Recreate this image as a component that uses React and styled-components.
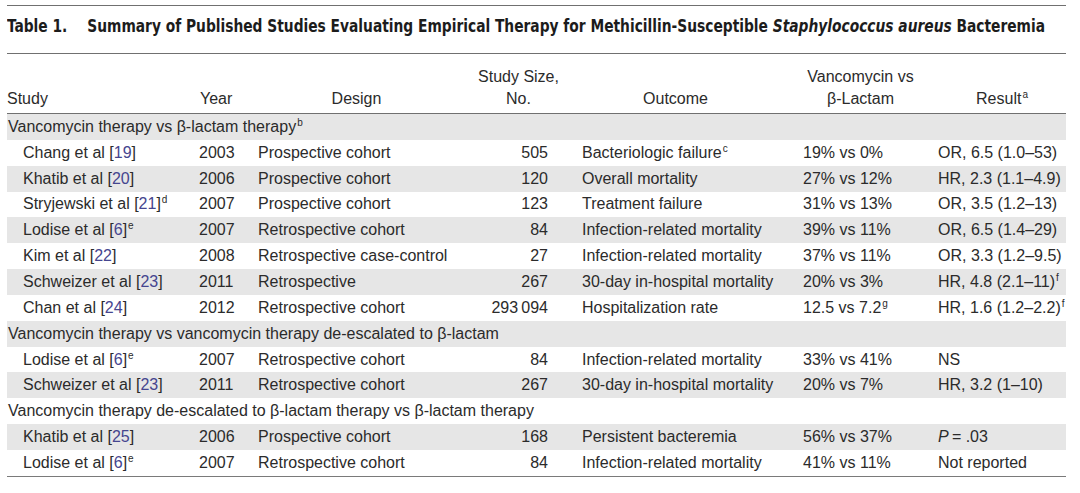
import React from "react";
import styled, { createGlobalStyle } from "styled-components";

const GlobalStyle = createGlobalStyle`
  html, body { margin: 0; padding: 0; background: #ffffff; }
  body { font-family: "Liberation Sans", Arial, sans-serif; color: #2b2b2b; }
`;

const COLS = "192px 59px 197px 127px 221px 135px 128px";

const Page = styled.div`
  width: 1059px;
  padding: 5px 0 0 7px;
`;

const TitleBar = styled.div`
  display: flex;
  align-items: center;
  height: 40px;
  padding-bottom: 7px;
  overflow: hidden;
  border-top: 1.5px solid #707070;
  border-bottom: 1.5px solid #707070;
`;

const TitleInner = styled.div`
  display: flex;
  flex: none;
  transform: scaleX(0.902);
  transform-origin: left center;
  font-family: "DejaVu Sans Condensed", "DejaVu Sans", sans-serif;
  font-stretch: condensed;
  font-weight: 700;
  font-size: 17px;
  color: #1c1c1c;
  white-space: nowrap;
`;

const TableLabel = styled.span`
  width: 89px;
  flex: none;
`;

const Table = styled.div`
  border-bottom: 1.5px solid #7a7a7a;
`;

const HeaderRow = styled.div`
  display: grid;
  grid-template-columns: ${COLS};
  align-items: end;
  height: 56px;
  padding-bottom: 3px;
  border-bottom: 1.5px solid #707070;
  font-size: 16px;
  line-height: 22px;
`;

const HeadCell = styled.div`
  text-align: ${(p) => p.$align || "center"};
  padding-right: ${(p) => p.$pr || 0}px;
  padding-left: ${(p) => p.$pl || 0}px;
  white-space: nowrap;
`;

const Row = styled.div`
  display: grid;
  grid-template-columns: ${COLS};
  align-items: center;
  height: 25.85px;
  background: ${(p) => (p.$shaded ? "#e6e6e6" : "transparent")};
  font-size: 16px;
  white-space: nowrap;
`;

const SectionRow = styled.div`
  display: flex;
  align-items: center;
  height: 25.85px;
  padding-left: 1px;
  background: ${(p) => (p.$shaded ? "#e6e6e6" : "transparent")};
  font-size: 16px;
  white-space: nowrap;
`;

const Cell = styled.div`
  text-align: ${(p) => p.$align || "left"};
  padding-left: ${(p) => p.$pl || 0}px;
  padding-right: ${(p) => p.$pr || 0}px;
`;

const Sup = styled.span`
  font-size: 10px;
  vertical-align: 6px;
  line-height: 0;
  margin-left: 1px;
`;

const RefNum = styled.span`
  color: #45458f;
`;

const Ital = styled.i`
  font-style: italic;
`;

const Ref = ({ n }) => (
  <>
    [<RefNum>{n}</RefNum>]
  </>
);

const sections = [
  {
    title: (
      <>
        Vancomycin therapy vs β-lactam therapy<Sup>b</Sup>
      </>
    ),
    rows: [
      ["Chang et al", "19", null, "2003", "Prospective cohort", "505", <>Bacteriologic failure<Sup>c</Sup></>, "19% vs 0%", "OR, 6.5 (1.0–53)"],
      ["Khatib et al", "20", null, "2006", "Prospective cohort", "120", "Overall mortality", "27% vs 12%", "HR, 2.3 (1.1–4.9)"],
      ["Stryjewski et al", "21", "d", "2007", "Prospective cohort", "123", "Treatment failure", "31% vs 13%", "OR, 3.5 (1.2–13)"],
      ["Lodise et al", "6", "e", "2007", "Retrospective cohort", "84", "Infection-related mortality", "39% vs 11%", "OR, 6.5 (1.4–29)"],
      ["Kim et al", "22", null, "2008", "Retrospective case-control", "27", "Infection-related mortality", "37% vs 11%", "OR, 3.3 (1.2–9.5)"],
      ["Schweizer et al", "23", null, "2011", "Retrospective", "267", "30-day in-hospital mortality", "20% vs 3%", <>HR, 4.8 (2.1–11)<Sup>f</Sup></>],
      ["Chan et al", "24", null, "2012", "Retrospective cohort", "293\u2009094", "Hospitalization rate", <>12.5 vs 7.2<Sup>g</Sup></>, <>HR, 1.6 (1.2–2.2)<Sup>f</Sup></>],
    ],
  },
  {
    title: <>Vancomycin therapy vs vancomycin therapy de-escalated to β-lactam</>,
    rows: [
      ["Lodise et al", "6", "e", "2007", "Retrospective cohort", "84", "Infection-related mortality", "33% vs 41%", "NS"],
      ["Schweizer et al", "23", null, "2011", "Retrospective cohort", "267", "30-day in-hospital mortality", "20% vs 7%", "HR, 3.2 (1–10)"],
    ],
  },
  {
    title: <>Vancomycin therapy de-escalated to β-lactam therapy vs β-lactam therapy</>,
    rows: [
      ["Khatib et al", "25", null, "2006", "Prospective cohort", "168", "Persistent bacteremia", "56% vs 37%", <><Ital>P</Ital>{"\u2009"}= .03</>],
      ["Lodise et al", "6", "e", "2007", "Retrospective cohort", "84", "Infection-related mortality", "41% vs 11%", "Not reported"],
    ],
  },
];

export default function App() {
  let idx = 0;
  const body = [];
  sections.forEach((s, si) => {
    const shadedS = idx % 2 === 0;
    idx++;
    body.push(
      <SectionRow key={`s${si}`} $shaded={shadedS}>
        <span>{s.title}</span>
      </SectionRow>
    );
    s.rows.forEach((r, ri) => {
      const shaded = idx % 2 === 0;
      idx++;
      const [name, ref, sup, year, design, size, outcome, vs, result] = r;
      body.push(
        <Row key={`r${si}-${ri}`} $shaded={shaded}>
          <Cell $pl={16}>
            {name} <Ref n={ref} />
            {sup && <Sup>{sup}</Sup>}
          </Cell>
          <Cell>{year}</Cell>
          <Cell>{design}</Cell>
          <Cell $align="right" $pr={34}>{size}</Cell>
          <Cell>{outcome}</Cell>
          <Cell>{vs}</Cell>
          <Cell>{result}</Cell>
        </Row>
      );
    });
  });

  return (
    <>
      <GlobalStyle />
      <Page>
        <TitleBar>
          <TitleInner>
            <TableLabel>Table 1.</TableLabel>
            <span>
              Summary of Published Studies Evaluating Empirical Therapy for Methicillin-Susceptible{" "}
              <Ital>Staphylococcus aureus</Ital> Bacteremia
            </span>
          </TitleInner>
        </TitleBar>
        <Table>
          <HeaderRow>
            <HeadCell $align="left">Study</HeadCell>
            <HeadCell $align="left" $pl={1}>Year</HeadCell>
            <HeadCell>Design</HeadCell>
            <HeadCell>
              Study Size,
              <br />
              No.
            </HeadCell>
            <HeadCell $pr={34}>Outcome</HeadCell>
            <HeadCell $pr={20}>
              Vancomycin vs
              <br />
              β-Lactam
            </HeadCell>
            <HeadCell>
              Result<Sup>a</Sup>
            </HeadCell>
          </HeaderRow>
          {body}
        </Table>
      </Page>
    </>
  );
}
